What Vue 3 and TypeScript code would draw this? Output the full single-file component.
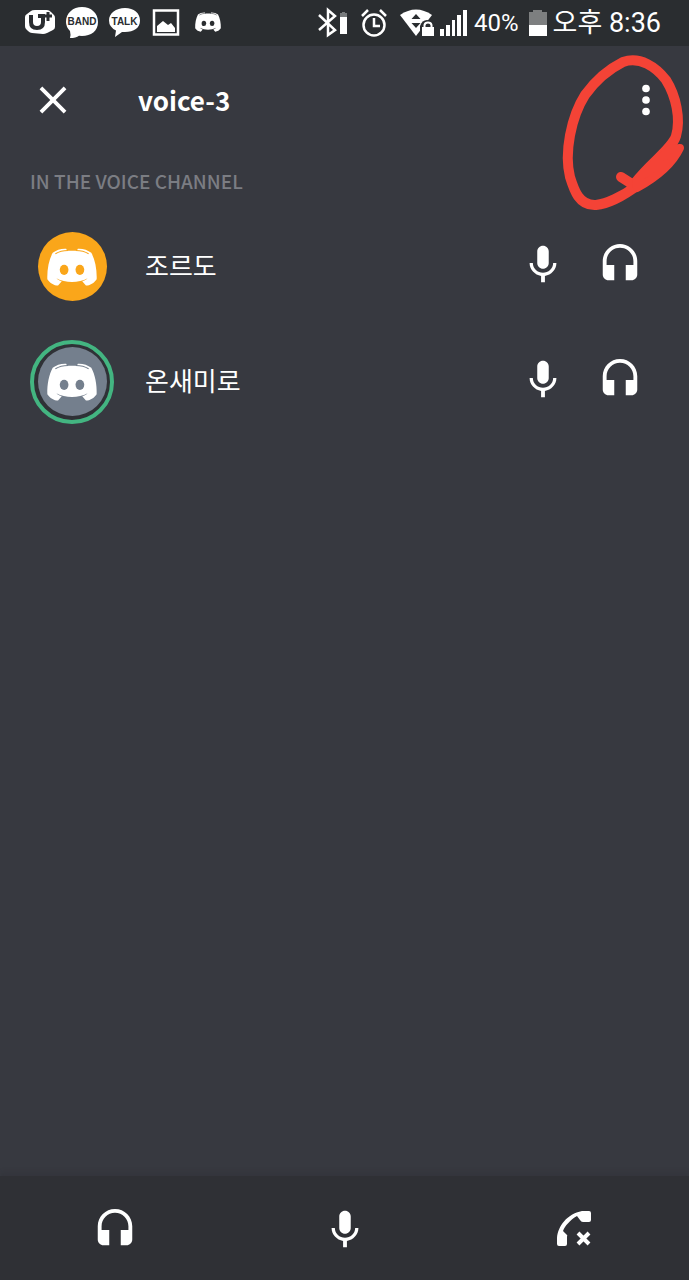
<script setup lang="ts">
interface Member {
  name: string
  tone: string
  speaking: boolean
}

const channel = 'voice-3'
const members: Member[] = [
  { name: '조르도', tone: 'orange', speaking: false },
  { name: '온새미로', tone: 'grey', speaking: true },
]
</script>

<template>
  <div class="app">
    <svg class="defs" width="0" height="0" aria-hidden="true">
      <symbol id="mic" viewBox="0 0 24 24">
        <path fill="currentColor" d="M12 14c1.66 0 2.99-1.34 2.99-3L15 5c0-1.66-1.34-3-3-3S9 3.34 9 5v6c0 1.66 1.34 3 3 3zm5.3-3c0 3-2.54 5.1-5.3 5.1S6.7 14 6.7 11H5c0 3.41 2.72 6.23 6 6.72V21h2v-3.28c3.28-.48 6-3.3 6-6.72h-1.7z" />
      </symbol>
      <symbol id="headset" viewBox="0 0 24 24">
        <path fill="currentColor" d="M12 1c-4.97 0-9 4.03-9 9v7c0 1.66 1.34 3 3 3h3v-8H5v-2c0-3.87 3.13-7 7-7s7 3.13 7 7v2h-4v8h3c1.66 0 3-1.34 3-3v-7c0-4.97-4.03-9-9-9z" />
      </symbol>
      <symbol id="face" viewBox="29 45 149 113">
        <path fill="#fff" d="M86 47C72 46 56 51 46 59C35 79 29 108 30 138C37 149 50 157 62 157L73 144C66 142 61 139 57 135C84 150 123 150 150 135C146 139 141 142 134 144L145 157C157 157 170 149 177 138C178 108 172 79 161 59C151 51 135 46 121 47L118 53H89Z" />
        <path fill="none" stroke="currentColor" stroke-width="3" d="M54 62C65 55 76 52 92 52M153 62C142 55 131 52 115 52" />
        <ellipse cx="80" cy="110" rx="13" ry="15" fill="currentColor" />
        <ellipse cx="127" cy="110" rx="13" ry="15" fill="currentColor" />
      </symbol>
    </svg>

    <div class="status">
      <div class="notifications">
        <svg class="notice" viewBox="0 0 32 32" aria-hidden="true">
          <path fill="#fff" d="M1 10Q1 8 3 7L7 4Q8 3 11 3L23 3Q25 3 27 5L30 8Q31 9 31 11V20Q31 22 29 23L23 26Q21 27 19 27L8 26Q6 26 4 24L2 22Q1 21 1 19Z" />
          <path fill="none" stroke="#2a2d30" stroke-width="4" d="M7 8V15Q7 21 13 21Q19 21 19 15V9H14" />
          <path fill="none" stroke="#2a2d30" stroke-width="3" d="M18 9H28M24 5V14" />
        </svg>
        <svg class="notice" viewBox="0 0 32 32" aria-hidden="true">
          <path fill="#fff" d="M16 0C25 0 32 6 32 15S25 29 16 29L13 28.700Q10 31 4 31Q5 28 4 24Q0 20 0 15C0 6 7 0 16 0Z" />
          <text x="16" y="18" class="logo-text">BAND</text>
        </svg>
        <svg class="notice" viewBox="0 0 32 32" aria-hidden="true">
          <path fill="#fff" d="M17 1C26 1 32 6 32 13.500S26 25 17 25L14 25L7 30L8 23.500Q1 20 1 13.500C1 6 8 1 17 1Z" />
          <text x="16.500" y="17.500" class="logo-text">TALK</text>
        </svg>
        <svg class="notice" viewBox="0 0 32 32" aria-hidden="true">
          <rect x="4" y="3.500" width="24" height="24" fill="none" stroke="#fff" stroke-width="2.500" />
          <path fill="#fff" d="M7 25V19L13 14L18 18L21 16L25 21V25Z" />
        </svg>
        <svg class="notice face-small" viewBox="0 0 32 32" aria-hidden="true">
          <use href="#face" x="3" y="5" width="26" height="20" />
        </svg>
      </div>
      <div class="system">
        <svg width="30" height="32" viewBox="0 0 30 32" aria-hidden="true">
          <path fill="none" stroke="#fff" stroke-width="2.500" d="M1 8L17 23L10 28V3L17 9L1 23" />
          <path fill="#fff" d="M22 8H29V27H22Z" />
          <path fill="#777a7c" d="M24 5H27V6H29V10H22V6H24Z" />
        </svg>
        <svg class="gap-large" width="28" height="32" viewBox="0 0 28 32" aria-hidden="true">
          <circle cx="14" cy="18" r="10.500" fill="none" stroke="#fff" stroke-width="2.500" />
          <path fill="none" stroke="#fff" stroke-width="2.500" d="M14 11V19H20M2 9L8 3M26 9L20 3" />
        </svg>
        <svg class="gap-large" width="34" height="32" viewBox="0 0 34 32" aria-hidden="true">
          <path fill="#fff" d="M0 8Q16 -3 32 8L16 29Z" />
          <path fill="#2a2d30" d="M11.500 12L16 7L20.500 12ZM11.500 16H20.500L16 21Z" />
          <path fill="#2a2d30" d="M20 30V19Q22 13 27 13Q33 13 34 19V30Z" />
          <rect x="22" y="20" width="12" height="9" fill="#fff" />
          <path fill="none" stroke="#fff" stroke-width="2" d="M24.500 21V18Q25 15.500 28 15.500Q31 15.500 31.500 18V21" />
        </svg>
        <svg class="gap-small" width="28" height="32" viewBox="0 0 28 32" aria-hidden="true">
          <path fill="#fff" d="M0 22H4V29H0ZM6 18H10V29H6ZM12 13H15V29H12ZM17 8H21V29H17ZM23 3H27V29H23Z" />
        </svg>
        <span class="percent">40%</span>
        <svg class="gap-medium" width="18" height="32" viewBox="0 0 18 32" aria-hidden="true">
          <path fill="#7d7f80" d="M0 5H4V3H13V5H18V18H0Z" />
          <path fill="#fff" d="M0 18H18V29H0Z" />
        </svg>
        <time class="clock" datetime="20:36">오후 8:36</time>
      </div>
    </div>

    <header class="header">
      <button type="button" class="icon-button" aria-label="Close">
        <svg class="icon" viewBox="0 0 24 24"><path fill="currentColor" d="M19 6.410L17.590 5 12 10.590 6.410 5 5 6.410 10.590 12 5 17.590 6.410 19 12 13.410 17.590 19 19 17.590 13.410 12z" /></svg>
      </button>
      <h1 class="title">{{ channel }}</h1>
      <button type="button" class="icon-button" aria-label="More options">
        <svg class="icon" viewBox="0 0 24 24">
          <circle v-for="y in [6, 12, 18]" :key="y" cx="12" :cy="y" r="2" fill="currentColor" />
        </svg>
      </button>
      <svg class="scribble" width="130" height="164" viewBox="559 50 130 164" aria-hidden="true">
        <path fill="none" stroke="#f44336" stroke-width="10" stroke-linecap="round" stroke-linejoin="round" d="M621 177L632 184L638 185C622 197 606 204 596 205C579 206 574 190 570 177C564 153 571 117 585 95C595 81 609 69 623 62C640 56 656 67 666 80C676 96 681 119 676 136C672 149 651 162 635 183" />
        <path fill="#f44336" stroke="#f44336" stroke-width="8" stroke-linejoin="round" d="M636 182C648 168 662 157 670 149L680 148C672 165 657 177 637 188Z" />
      </svg>
    </header>

    <main class="content">
      <h2 class="label">IN THE VOICE CHANNEL</h2>
      <ul class="members">
        <li v-for="member in members" :key="member.name" class="member">
          <div class="ring" :class="{ speaking: member.speaking }">
            <div class="avatar" :class="member.tone">
              <svg class="face" aria-hidden="true"><use href="#face" /></svg>
            </div>
          </div>
          <span class="name">{{ member.name }}</span>
          <div class="indicators">
            <svg class="icon" role="img" aria-label="Microphone on"><use href="#mic" /></svg>
            <svg class="icon" role="img" aria-label="Audio on"><use href="#headset" /></svg>
          </div>
        </li>
      </ul>
    </main>

    <footer class="controls">
      <button type="button" class="control" aria-label="Deafen">
        <svg class="icon"><use href="#headset" /></svg>
      </button>
      <button type="button" class="control" aria-label="Mute">
        <svg class="icon"><use href="#mic" /></svg>
      </button>
      <button type="button" class="control" aria-label="Disconnect">
        <svg class="icon" viewBox="0 0 46 46">
          <path fill="currentColor" d="M6 37V31C7 19 16 7 31 4H38Q40 4 40 6V13Q40 15 38 15H32Q30 15 29 13L26 9C19 13 14 19 12 24L15 27Q17 28 16 30V37Q16 39 14 39H8Q6 39 6 37Z" />
          <path fill="none" stroke="currentColor" stroke-width="4" d="M27 26L38 37M38 26L27 37" />
        </svg>
      </button>
    </footer>
  </div>
</template>

<style>
body {
  margin: 0;
  background: #373940;
}
</style>

<style scoped>
.app {
  display: flex;
  flex-direction: column;
  min-height: 100vh;
  color: #fff;
  background: #373940;
  font-family: "Noto Sans CJK KR", "Noto Sans", sans-serif;
}

.defs {
  position: absolute;
}

.status {
  display: flex;
  justify-content: space-between;
  align-items: center;
  height: 46px;
  padding: 0 28px 0 24px;
  background: #2a2d30;
  font-family: Roboto, "Noto Sans CJK KR", sans-serif;
  white-space: nowrap;
}

.notifications {
  display: flex;
  gap: 10px;
}

.notice {
  width: 32px;
  height: 32px;
}

.logo-text {
  fill: #2a2d30;
  font: bold 10px "Liberation Sans", sans-serif;
  text-anchor: middle;
}

.face-small {
  color: #2a2d30;
}

.system {
  display: flex;
  align-items: center;
}

.gap-large {
  margin-left: 12px;
}

.gap-medium {
  margin-left: 10px;
}

.gap-small {
  margin-left: 6px;
}

.percent {
  margin-left: 6px;
  font-size: 24px;
  line-height: 32px;
}

.clock {
  margin-left: 6px;
  font-size: 27px;
  line-height: 32px;
}

.header {
  position: relative;
  display: flex;
  align-items: center;
  height: 108px;
  padding: 0 20px 0 30px;
}

.icon-button,
.control {
  display: flex;
  justify-content: center;
  align-items: center;
  padding: 0;
  border: 0;
  color: inherit;
  background: none;
  cursor: pointer;
}

.icon {
  display: block;
  width: 46px;
  height: 46px;
}

.title {
  flex: 1;
  margin: 0 0 0 62px;
  font-size: 26px;
  line-height: 30px;
  font-weight: 700;
}

.scribble {
  position: absolute;
  top: 4px;
  right: 0;
  pointer-events: none;
}

.content {
  flex: 1;
}

.label {
  margin: 0;
  padding: 0 30px 2px;
  color: #7b7d83;
  font-size: 19px;
  line-height: 53px;
  font-weight: 500;
}

.members {
  margin: 0;
  padding: 0;
  list-style: none;
}

.member {
  display: flex;
  align-items: center;
  height: 115px;
  padding: 0 46px 0 30px;
}

.ring {
  display: flex;
  justify-content: center;
  align-items: center;
  box-sizing: border-box;
  width: 84px;
  height: 84px;
  border: 4px solid transparent;
  border-radius: 50%;
}

.speaking {
  border-color: #43b581;
  background: #2f3136;
}

.avatar {
  display: flex;
  justify-content: center;
  align-items: center;
  width: 69px;
  height: 69px;
  border-radius: 50%;
}

.orange {
  color: #faa61a;
  background: #faa61a;
}

.grey {
  color: #747f8d;
  background: #747f8d;
}

.face {
  width: 50px;
  height: 38px;
}

.name {
  flex: 1;
  margin-left: 31px;
  padding-bottom: 4px;
  font-size: 26px;
  line-height: 32px;
}

.indicators {
  display: flex;
  gap: 31px;
  padding-bottom: 4px;
}

.controls {
  display: flex;
  height: 104px;
  background: #2f3035;
  box-shadow: 0 -4px 4px rgba(47, 48, 53, 0.3);
}

.control {
  flex: 1;
  padding-top: 4px;
}
</style>
